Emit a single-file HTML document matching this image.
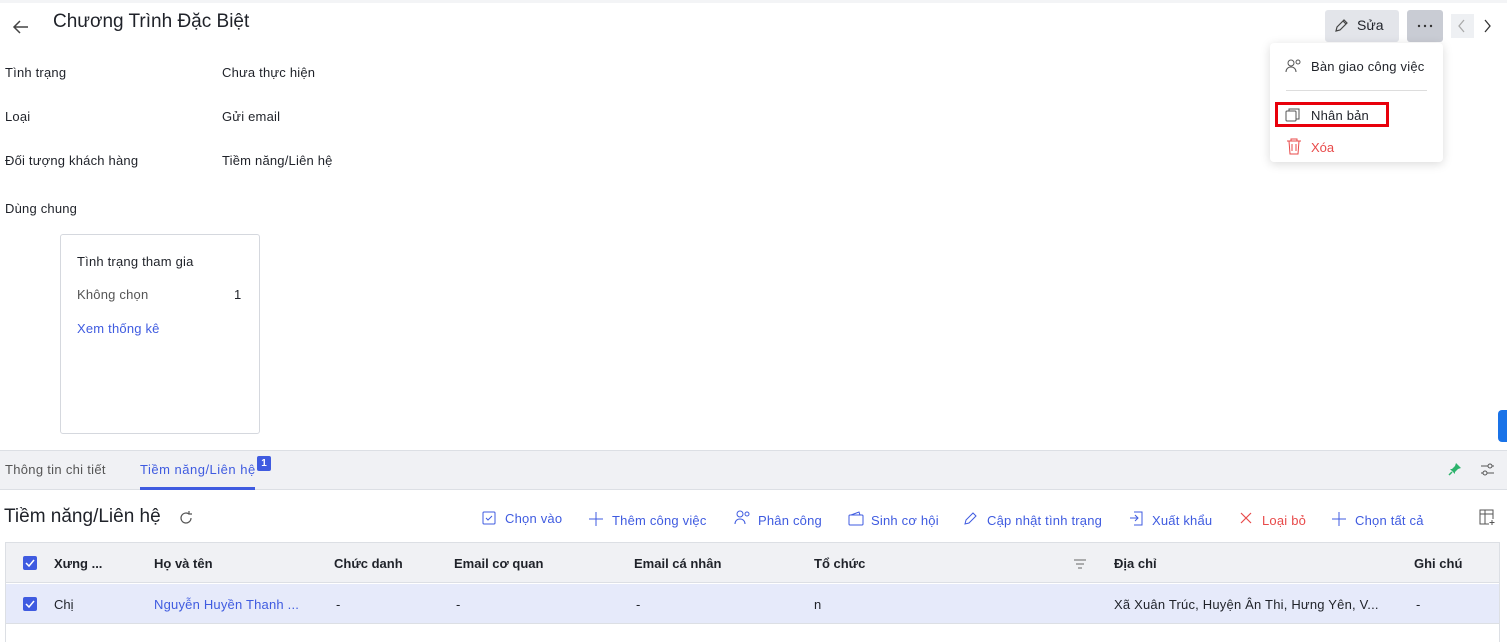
<!DOCTYPE html>
<html><head><meta charset="utf-8"><style>
*{box-sizing:border-box;margin:0;padding:0}
body{width:1507px;height:642px;overflow:hidden;background:#fff;font-family:"Liberation Sans",sans-serif;color:#1f2229;position:relative;font-size:13px}
.a{position:absolute;white-space:nowrap}
svg{position:absolute}
.blue{color:#3f5be0}
.th{font-weight:bold;font-size:13px;top:556px}
.td{font-size:13px;top:597px}
.w{letter-spacing:0.2px}
</style></head><body>
<div class="a" style="left:0;top:0;width:1507px;height:3px;background:#f3f4f6"></div>
<svg style="left:12px;top:18px" width="18" height="18" viewBox="0 0 18 18"><path d="M16 9H2M8 3L2 9l6 6" stroke="#444" stroke-width="1.5" fill="none"/></svg>
<div class="a" style="left:53px;top:11px;font-size:19px;color:#1f2229">Chương Trình Đặc Biệt</div>

<div class="a" style="left:1325px;top:10px;width:74px;height:32px;background:#e3e5ea;border-radius:3px"></div>
<svg style="left:1334px;top:18px" width="15" height="15" viewBox="0 0 15 15"><path d="M2 13l1-4 7-7 3 3-7 7zM9 3l3 3" stroke="#444" stroke-width="1.2" fill="none"/></svg>
<div class="a" style="left:1357px;top:17px;font-size:14px">Sửa</div>
<div class="a" style="left:1407px;top:10px;width:36px;height:32px;background:#c9ccd4;border-radius:3px"></div>
<svg style="left:1417px;top:24px" width="16" height="4" viewBox="0 0 16 4"><circle cx="2" cy="2" r="1.2" fill="#333"/><circle cx="8" cy="2" r="1.2" fill="#333"/><circle cx="14" cy="2" r="1.2" fill="#333"/></svg>
<div class="a" style="left:1451px;top:14px;width:23px;height:24px;background:#eef0f3"></div>
<svg style="left:1457px;top:19px" width="10" height="14" viewBox="0 0 10 14"><path d="M7 1L2 7l5 6" stroke="#aaa" stroke-width="1.3" fill="none"/></svg>
<svg style="left:1482px;top:19px" width="10" height="14" viewBox="0 0 10 14"><path d="M3 1l5 6-5 6" stroke="#333" stroke-width="1.3" fill="none"/></svg>

<div class="a" style="left:1270px;top:43px;width:173px;height:119px;background:#fff;border-radius:4px;box-shadow:0 2px 10px rgba(0,0,0,.15)"></div>
<svg style="left:1285px;top:58px" width="18" height="16" viewBox="0 0 18 16"><circle cx="6" cy="5" r="3" stroke="#555" fill="none"/><path d="M1 14c0-3 2-5 5-5s5 2 5 5" stroke="#555" fill="none"/><circle cx="13" cy="4" r="2" stroke="#555" fill="none"/></svg>
<div class="a w" style="left:1311px;top:59px;font-size:13px">Bàn giao công việc</div>
<div class="a" style="left:1286px;top:90px;width:141px;height:1px;background:#ddd"></div>
<div class="a" style="left:1275px;top:102px;width:114px;height:25px;border:3px solid #e8000b"></div>
<svg style="left:1285px;top:107px" width="16" height="16" viewBox="0 0 16 16"><rect x="1" y="4" width="10" height="10" rx="1" stroke="#555" fill="none"/><path d="M4 4V2h10v10h-3" stroke="#555" fill="none"/></svg>
<div class="a w" style="left:1311px;top:108px;font-size:13px">Nhân bản</div>
<svg style="left:1286px;top:138px" width="16" height="17" viewBox="0 0 16 17"><path d="M1 3h14M5 3V1h6v2M3 3l1 13h8l1-13M6 6v7M10 6v7" stroke="#e84a4a" fill="none"/></svg>
<div class="a" style="left:1311px;top:140px;font-size:13px;color:#e84a4a">Xóa</div>

<div class="a w" style="left:5px;top:65px">Tình trạng</div><div class="a w" style="left:222px;top:65px">Chưa thực hiện</div>
<div class="a w" style="left:5px;top:109px">Loại</div><div class="a w" style="left:222px;top:109px">Gửi email</div>
<div class="a w" style="left:5px;top:153px">Đối tượng khách hàng</div><div class="a w" style="left:222px;top:153px">Tiềm năng/Liên hệ</div>
<div class="a w" style="left:5px;top:201px">Dùng chung</div>

<div class="a" style="left:60px;top:234px;width:200px;height:200px;border:1px solid #d5d8de;border-radius:3px"></div>
<div class="a w" style="left:77px;top:254px">Tình trạng tham gia</div>
<div class="a w" style="left:77px;top:287px;color:#555">Không chọn</div>
<div class="a" style="left:234px;top:287px">1</div>
<div class="a blue w" style="left:77px;top:321px">Xem thống kê</div>

<div class="a" style="left:1498px;top:410px;width:12px;height:32px;background:#1a73e8;border-radius:4px 0 0 4px"></div>

<div class="a" style="left:0;top:450px;width:1507px;height:40px;background:#f0f1f4;border-top:1px solid #dcdfe4;border-bottom:1px solid #dcdfe4"></div>
<div class="a" style="left:5px;top:462px;color:#555;letter-spacing:0.3px">Thông tin chi tiết</div>
<div class="a blue" style="left:140px;top:462px;letter-spacing:0.5px">Tiềm năng/Liên hệ</div>
<div class="a" style="left:140px;top:487px;width:115px;height:3px;background:#3f5be0"></div>
<div class="a" style="left:257px;top:456px;width:14px;height:15px;background:#3f5be0;color:#fff;font-size:10px;font-weight:bold;text-align:center;line-height:15px;border-radius:2px">1</div>
<svg style="left:1448px;top:462px" width="14" height="14" viewBox="0 0 14 14"><path d="M8 1l5 5-3 1-3 3v2L2 7h2l3-3z" fill="#2db36c"/><path d="M4 10l-3 3" stroke="#2db36c" stroke-width="1.5"/></svg>
<svg style="left:1480px;top:462px" width="15" height="15" viewBox="0 0 15 15"><path d="M1 4h13M1 11h13" stroke="#555"/><circle cx="10" cy="4" r="2" fill="#f0f1f4" stroke="#555"/><circle cx="5" cy="11" r="2" fill="#f0f1f4" stroke="#555"/></svg>

<div class="a" style="left:4px;top:506px;font-size:19px">Tiềm năng/Liên hệ</div>
<svg style="left:178px;top:510px" width="16" height="16" viewBox="0 0 16 16"><path d="M13 8a5 5 0 1 1-2-4M11 1v3h3" stroke="#555" stroke-width="1.2" fill="none"/></svg>

<svg style="left:482px;top:511px" width="14" height="14" viewBox="0 0 14 14"><rect x="1" y="1" width="12" height="12" rx="1" stroke="#3f5be0" fill="none"/><path d="M4 7l2 2 4-4" stroke="#3f5be0" fill="none"/></svg>
<div class="a blue w" style="left:505px;top:511px">Chọn vào</div>
<svg style="left:589px;top:512px" width="14" height="14" viewBox="0 0 14 14"><path d="M7 0v14M0 7h14" stroke="#3f5be0"/></svg>
<div class="a blue w" style="left:612px;top:513px">Thêm công việc</div>
<svg style="left:734px;top:510px" width="17" height="15" viewBox="0 0 17 15"><circle cx="6" cy="4" r="3" stroke="#3f5be0" fill="none"/><path d="M1 14c0-3 2-5 5-5s5 2 5 5" stroke="#3f5be0" fill="none"/><circle cx="13" cy="4" r="2" stroke="#3f5be0" fill="none"/></svg>
<div class="a blue w" style="left:758px;top:513px">Phân công</div>
<svg style="left:848px;top:511px" width="16" height="15" viewBox="0 0 16 15"><rect x="1" y="4" width="14" height="10" rx="1" stroke="#3f5be0" fill="none"/><path d="M3 4l8-3 1 3" stroke="#3f5be0" fill="none"/></svg>
<div class="a blue w" style="left:871px;top:513px">Sinh cơ hội</div>
<svg style="left:963px;top:511px" width="15" height="15" viewBox="0 0 15 15"><path d="M2 13l1-4 7-7 3 3-7 7z" stroke="#3f5be0" fill="none"/></svg>
<div class="a blue w" style="left:987px;top:513px">Cập nhật tình trạng</div>
<svg style="left:1129px;top:511px" width="15" height="15" viewBox="0 0 15 15"><path d="M1 7h8M6 4l3 3-3 3M5 1h8v13H5" stroke="#3f5be0" fill="none"/></svg>
<div class="a blue w" style="left:1152px;top:513px">Xuất khẩu</div>
<svg style="left:1240px;top:512px" width="12" height="12" viewBox="0 0 12 12"><path d="M1 1l10 10M11 1L1 11" stroke="#e84a4a" stroke-width="1.2"/></svg>
<div class="a w" style="left:1262px;top:513px;color:#e84a4a">Loại bỏ</div>
<svg style="left:1332px;top:512px" width="14" height="14" viewBox="0 0 14 14"><path d="M7 0v14M0 7h14" stroke="#3f5be0"/></svg>
<div class="a blue w" style="left:1355px;top:513px">Chọn tất cả</div>
<svg style="left:1479px;top:509px" width="16" height="17" viewBox="0 0 16 17"><path d="M10 15H1V1h13v9M1 5h13M6 1v14M13 11v5M10.5 13.5h5" stroke="#555" fill="none"/></svg>

<div class="a" style="left:5px;top:542px;width:1495px;height:100px;border:1px solid #dcdfe4;border-bottom:none"></div>
<div class="a" style="left:6px;top:543px;width:1493px;height:40px;background:#f0f1f4;border-bottom:1px solid #dcdfe4"></div>
<div class="a" style="left:6px;top:584px;width:1493px;height:40px;background:#e6eafa;border-bottom:1px solid #dcdfe4"></div>
<div class="a" style="left:23px;top:556px;width:14px;height:14px;background:#3f5be0;border-radius:2px"></div>
<svg style="left:23px;top:556px" width="14" height="14" viewBox="0 0 14 14"><path d="M3 7l3 3 5-6" stroke="#fff" stroke-width="1.5" fill="none"/></svg>
<div class="a" style="left:23px;top:597px;width:14px;height:14px;background:#3f5be0;border-radius:2px"></div>
<svg style="left:23px;top:597px" width="14" height="14" viewBox="0 0 14 14"><path d="M3 7l3 3 5-6" stroke="#fff" stroke-width="1.5" fill="none"/></svg>
<div class="a th" style="left:54px">Xưng ...</div>
<div class="a th" style="left:154px">Họ và tên</div>
<div class="a th" style="left:334px">Chức danh</div>
<div class="a th" style="left:454px">Email cơ quan</div>
<div class="a th" style="left:634px">Email cá nhân</div>
<div class="a th" style="left:814px">Tổ chức</div>
<svg style="left:1074px;top:559px" width="12" height="10" viewBox="0 0 12 10"><path d="M0 1h12M2 5h8M4 9h4" stroke="#666"/></svg>
<div class="a th" style="left:1114px">Địa chỉ</div>
<div class="a th" style="left:1414px">Ghi chú</div>
<div class="a td" style="left:54px">Chị</div>
<div class="a td blue w" style="left:154px">Nguyễn Huyền Thanh ...</div>
<div class="a td" style="left:336px">-</div>
<div class="a td" style="left:456px">-</div>
<div class="a td" style="left:636px">-</div>
<div class="a td" style="left:814px">n</div>
<div class="a td w" style="left:1114px">Xã Xuân Trúc, Huyện Ân Thi, Hưng Yên, V...</div>
<div class="a td" style="left:1416px">-</div>
</body></html>
